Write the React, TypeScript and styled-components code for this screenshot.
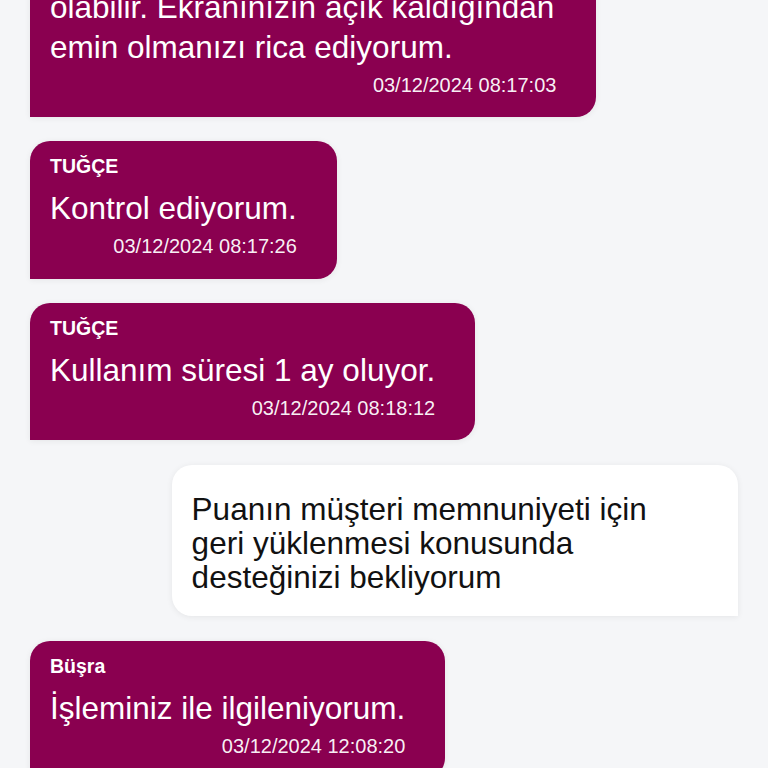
import React from "react"
import styled, { createGlobalStyle, css } from "styled-components"

interface Message {
  id: number
  author?: string
  text: string
  time?: string
  mine?: boolean
}

const messages: Message[] = [
  {
    id: 1,
    author: "TUĞÇE",
    text: "Uygulama arka planda kaldığı için olabilir. Ekranınızın açık kaldığından emin olmanızı rica ediyorum.",
    time: "03/12/2024 08:17:03",
  },
  {
    id: 2,
    author: "TUĞÇE",
    text: "Kontrol ediyorum.",
    time: "03/12/2024 08:17:26",
  },
  {
    id: 3,
    author: "TUĞÇE",
    text: "Kullanım süresi 1 ay oluyor.",
    time: "03/12/2024 08:18:12",
  },
  {
    id: 4,
    mine: true,
    text: "Puanın müşteri memnuniyeti için geri yüklenmesi konusunda desteğinizi bekliyorum",
  },
  {
    id: 5,
    author: "Büşra",
    text: "İşleminiz ile ilgileniyorum.",
    time: "03/12/2024 12:08:20",
  },
]

const GlobalStyle = createGlobalStyle`
  html, body {
    margin: 0;
    padding: 0;
    background: #f5f6f8;
  }
  body {
    font-family: "Liberation Sans", Arial, sans-serif;
    -webkit-font-smoothing: antialiased;
  }
`

const Viewport = styled.div`
  height: 100vh;
  overflow: hidden;
  background: #f5f6f8;
`

// the thread is scrolled: the first bubble starts above the fold
const Thread = styled.div`
  display: flex;
  flex-direction: column;
  gap: 24.5px;
  margin-top: -100.5px;
  padding: 0 30px 40px;
`

const Bubble = styled.div<{ $mine?: boolean }>`
  max-width: 80%;
  box-sizing: border-box;
  box-shadow: 0 1px 6px rgba(0, 0, 0, 0.07);
  ${({ $mine }) =>
    $mine
      ? css`
          align-self: flex-end;
          width: 80%;
          background: #ffffff;
          color: #111111;
          padding: 27px 40px 22.4px 20px;
          border-radius: 20px 20px 0 20px;
        `
      : css`
          align-self: flex-start;
          background: #8a0050;
          color: #ffffff;
          padding: 13px 40px 20.3px 20px;
          border-radius: 20px 20px 20px 0;
        `}
`

const Author = styled.div`
  font-size: 19.5px;
  line-height: 24px;
  font-weight: 700;
  margin-bottom: 10px;
`

const Text = styled.div<{ $mine?: boolean }>`
  font-size: 31.5px;
  line-height: ${({ $mine }) => ($mine ? "34px" : "40px")};
`

const Time = styled.div`
  margin-top: 6px;
  font-size: 20px;
  line-height: 24px;
  text-align: right;
  color: rgba(255, 255, 255, 0.95);
`

const ChatBubble = ({ message }: { message: Message }) => (
  <Bubble $mine={message.mine}>
    {message.author && <Author>{message.author}</Author>}
    <Text $mine={message.mine}>{message.text}</Text>
    {message.time && <Time>{message.time}</Time>}
  </Bubble>
)

export default function App() {
  return (
    <>
      <GlobalStyle />
      <Viewport>
        <Thread>
          {messages.map((m) => (
            <ChatBubble key={m.id} message={m} />
          ))}
        </Thread>
      </Viewport>
    </>
  )
}
